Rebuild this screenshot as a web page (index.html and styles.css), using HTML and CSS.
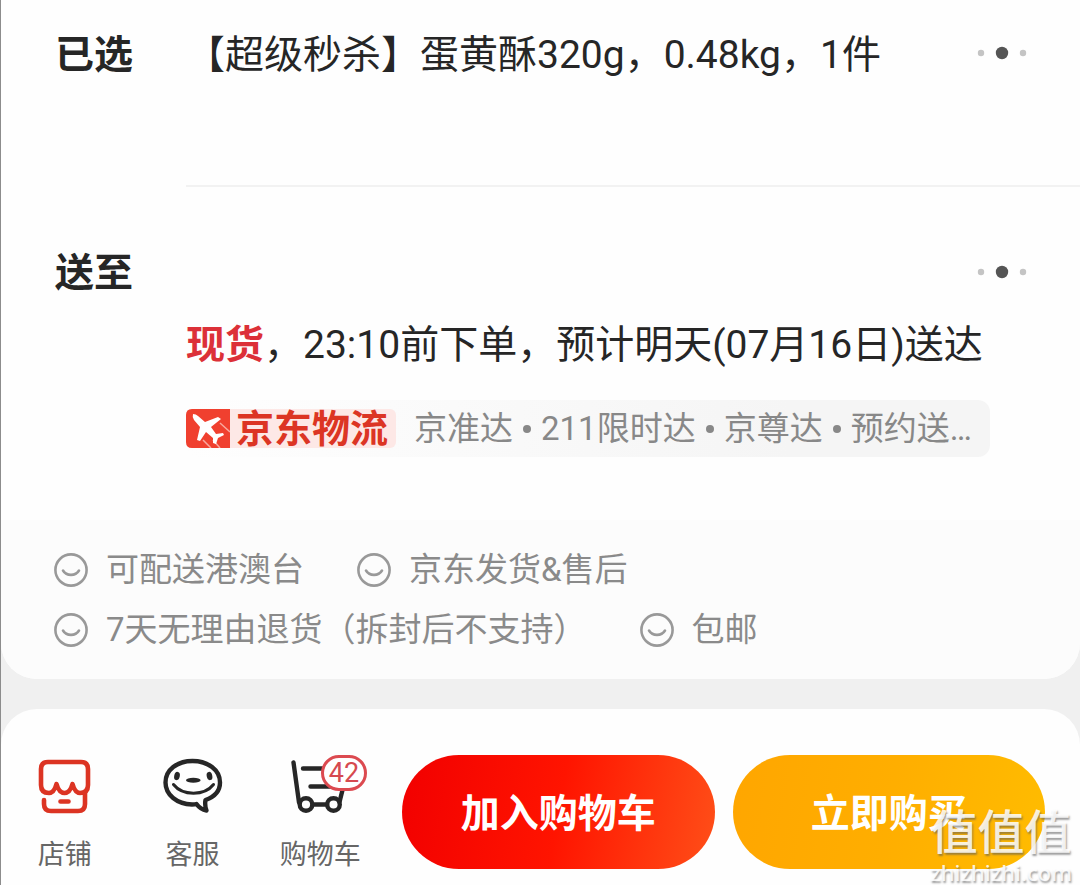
FILE: index.html
```html
<!DOCTYPE html>
<html lang="zh-CN">
<head>
<meta charset="utf-8">
<meta name="viewport" content="width=device-width, initial-scale=1">
<title>蛋黄酥</title>
<link rel="stylesheet" href="styles.css">
</head>
<body>
<svg class="defs" aria-hidden="true">
  <symbol id="smile" viewBox="0 0 34 34">
    <circle cx="17" cy="17" r="15.6"/>
    <path d="M9 17.500c3.500 5.800 12.500 5.800 16 0"/>
  </symbol>
  <symbol id="dots" viewBox="0 0 56 20">
    <circle cx="7" cy="10" r="3.200" fill="#c4c4c4"/>
    <circle cx="28" cy="10" r="6.200" fill="#555"/>
    <circle cx="49" cy="10" r="3.200" fill="#c4c4c4"/>
  </symbol>
</svg>
<div class="page">
  <main class="card">
    <section class="row">
      <h2 class="label">已选</h2>
      <div class="content selected">
        <p class="text">【超级秒杀】蛋黄酥320g，0.48kg，1件</p>
        <button class="more" type="button" aria-label="更多规格"><svg><use href="#dots"/></svg></button>
      </div>
    </section>
    <section class="row">
      <h2 class="label deliver-label">送至</h2>
      <div class="content deliver">
        <div class="address"><button class="more" type="button" aria-label="更换地址"><svg><use href="#dots"/></svg></button></div>
        <p class="text"><strong class="stock">现货</strong>，23:10前下单，预计明天(07月16日)送达</p>
        <div class="logistics">
          <span class="jd">
            <svg class="plane" viewBox="0 0 44 39" aria-hidden="true">
              <path fill="#f0402f" d="M6 0h38v39H6q-6 0-6-6V6q0-6 6-6z"/>
              <path stroke="#f9a79e" stroke-width="1.500" d="M34 14l10 9M17 31l8 8M27 31l7 8"/>
              <path fill="#fff" d="M7 5q3 0 5 2l7 6 13-5 3 2-10 8 5 7 7-1 1 2-6 3-2 6-3-1 0-5-7-6-6 9-3-1 3-13-6-7q-2-3-1-6z"/>
            </svg>
            <b class="jd-name">京东物流</b>
          </span>
          <span class="modes"><span>京准达</span><i class="sep"></i><span>211限时达</span><i class="sep"></i><span>京尊达</span><i class="sep"></i><span>预约送…</span></span>
        </div>
      </div>
    </section>
    <ul class="services">
      <li class="service"><svg><use href="#smile"/></svg>可配送港澳台</li>
      <li class="service"><svg><use href="#smile"/></svg>京东发货&amp;售后</li>
      <li class="service"><svg><use href="#smile"/></svg>7天无理由退货（拆封后不支持）</li>
      <li class="service"><svg><use href="#smile"/></svg>包邮</li>
    </ul>
  </main>
  <footer class="bar">
    <nav class="nav">
      <a class="item" href="#shop">
        <svg class="icon" viewBox="0 0 64 60" fill="none" stroke="#dc3423" stroke-width="4.600" stroke-linecap="round" stroke-linejoin="round">
          <path d="M16 36q-8 0-8-8V12q0-7 7-7h33q7 0 7 7v16q0 8-8 8-5 0-7.500-9-2.500 9-8 9t-8-9q-2.500 9-7.500 9z"/>
          <path d="M11 43v4q0 7 7 7h27q7 0 7-7V35M27.500 44.500h8"/>
        </svg>
        店铺
      </a>
      <a class="item" href="#service">
        <svg class="icon" viewBox="0 0 64 60" fill="none" stroke="#262626" stroke-width="4.400" stroke-linejoin="round">
          <path d="M31.500 4C16 4 4.500 13 4.500 25.500S16 47 31 47.500q3 0 4.500-.5 4 5.500 10 6.500-2-5-1-10.500C53 40 59 34 59 25.500 59 13 47 4 31.500 4z"/>
          <path stroke-width="3" stroke-linecap="round" d="M12.500 27.500c9 11.500 31 11.500 40 0"/>
          <g fill="#262626" stroke="none"><ellipse cx="16" cy="19" rx="2.800" ry="4.200" transform="rotate(12 16 19)"/><ellipse cx="48.500" cy="19" rx="2.800" ry="4.200" transform="rotate(-12 48.500 19)"/><ellipse cx="32.300" cy="23.300" rx="7.300" ry="2.500"/></g>
        </svg>
        客服
      </a>
      <a class="item" href="#cart">
        <svg class="icon" viewBox="0 0 64 60" fill="none" stroke="#262626" stroke-width="4.400" stroke-linecap="round" stroke-linejoin="round">
          <path d="M5.500 5.500l5.500 40M15 11.500h22M22.500 29.500h20M25 47.500h14M54.500 33l-3 12"/>
          <circle cx="18" cy="47.500" r="6.300"/><circle cx="45.500" cy="47.500" r="6.300"/>
        </svg>
        <span class="count">42</span>
        购物车
      </a>
    </nav>
    <div class="actions">
      <button class="action add" type="button">加入购物车</button>
      <button class="action buy" type="button">立即购买</button>
    </div>
  </footer>
  <div class="watermark"><span class="mark">值值值</span><span class="site">zhizhizhi.com</span></div>
</div>
</body>
</html>
```

FILE: styles.css
```css
* { box-sizing: border-box; }
body {
  margin: 0;
  background: #f0f0f0;
  color: #262626;
  font-family: Roboto, "Noto Sans CJK SC", sans-serif;
}
h2, p, ul { margin: 0; padding: 0; }
button { border: 0; padding: 0; font: inherit; cursor: pointer; }
a { color: inherit; text-decoration: none; }
svg { display: block; flex: none; }
.defs { position: absolute; width: 0; height: 0; }

.page {
  position: relative;
  display: flex;
  flex-direction: column;
  gap: 30px;
  min-height: 100vh;
  border-left: 1px solid #8c8c8c;
  overflow: hidden;
}

.card { background: #fefefe; border-radius: 0 0 36px 36px; overflow: hidden; }
.row { display: flex; padding-left: 54px; }
.label { width: 131px; flex: none; padding-top: 27px; font-size: 39px; line-height: 56px; font-weight: 700; }
.deliver-label { padding-top: 58px; }
.content { flex: 1; min-width: 0; }
.text { font-size: 39px; line-height: 58px; white-space: nowrap; }
.selected {
  display: flex;
  justify-content: space-between;
  align-items: flex-start;
  padding: 26px 50px 101px 0;
  border-bottom: 2px solid #f2f2f2;
}
.more { display: flex; align-items: center; height: 54px; background: none; }
.more svg { width: 56px; height: 20px; }
.deliver { padding: 58px 0 63px; }
.address { display: flex; justify-content: flex-end; height: 56px; margin-bottom: 15px; padding-right: 50px; }
.stock { color: #dc3038; font-weight: 700; }
.logistics {
  display: flex;
  align-items: center;
  gap: 18px;
  height: 57px;
  margin: 26px 90px 0 0;
  border-radius: 12px;
  background: linear-gradient(90deg, #fefefe, #f5f5f5 75%);
  white-space: nowrap;
}
.jd { display: flex; align-items: center; height: 39px; border-radius: 6px; background: #fde8e6; }
.plane { width: 44px; height: 39px; }
.jd-name { width: 166px; padding-left: 6px; color: #dc3524; font-size: 38px; line-height: 42px; }
.modes { display: flex; align-items: center; color: #888; font-size: 33px; line-height: 48px; }
.sep { width: 8px; height: 8px; margin: 0 10px; border-radius: 50%; background: #888; }

.services {
  display: flex;
  flex-wrap: wrap;
  column-gap: 53px;
  padding: 20px 50px 19px 53px;
  background: #fcfcfc;
  list-style: none;
}
.service { display: flex; align-items: center; gap: 18px; color: #8a8a8a; font-size: 33px; line-height: 60px; white-space: nowrap; }
.service svg { width: 34px; height: 34px; fill: none; stroke: #999; stroke-width: 2.6; stroke-linecap: round; }

.bar {
  display: flex;
  flex: 1;
  align-items: flex-start;
  gap: 18px;
  padding: 46px 35px 16px 0;
  border-radius: 36px 36px 0 0;
  background: #fefefe;
}
.nav { display: flex; width: 383px; flex: none; }
.item {
  position: relative;
  display: flex;
  flex: 1;
  flex-direction: column;
  align-items: center;
  gap: 18px;
  padding-top: 2px;
  color: #666;
  font-size: 27px;
  line-height: 40px;
}
.icon { width: 64px; height: 60px; }
.count {
  position: absolute;
  top: 0;
  right: 17px;
  width: 46px;
  height: 36px;
  border: 3px solid #dc4a50;
  border-radius: 18px;
  background: #fff;
  color: #d64a50;
  font-size: 27px;
  line-height: 30px;
  text-align: center;
}
.actions { display: flex; flex: 1; gap: 18px; }
.action { flex: 1; height: 114px; padding-bottom: 4px; border-radius: 57px; color: #fff; font-size: 39px; font-weight: 700; }
.add { background: linear-gradient(100deg, #f20000, #ff1400 50%, #ff4f18); }
.buy { background: linear-gradient(100deg, #ffa600, #ffae00 50%, #ffbc00); }

.watermark {
  position: absolute;
  right: 8px;
  bottom: 4px;
  display: flex;
  flex-direction: column;
  align-items: center;
  color: rgba(255, 255, 255, 0.85);
  text-shadow: 1px 2px 2px rgba(90, 90, 90, 0.6);
  pointer-events: none;
}
.mark { font-size: 47px; font-weight: 500; line-height: 48px; }
.site { font-family: "Noto Sans", sans-serif; font-size: 22px; font-weight: 500; line-height: 30px; }
```
